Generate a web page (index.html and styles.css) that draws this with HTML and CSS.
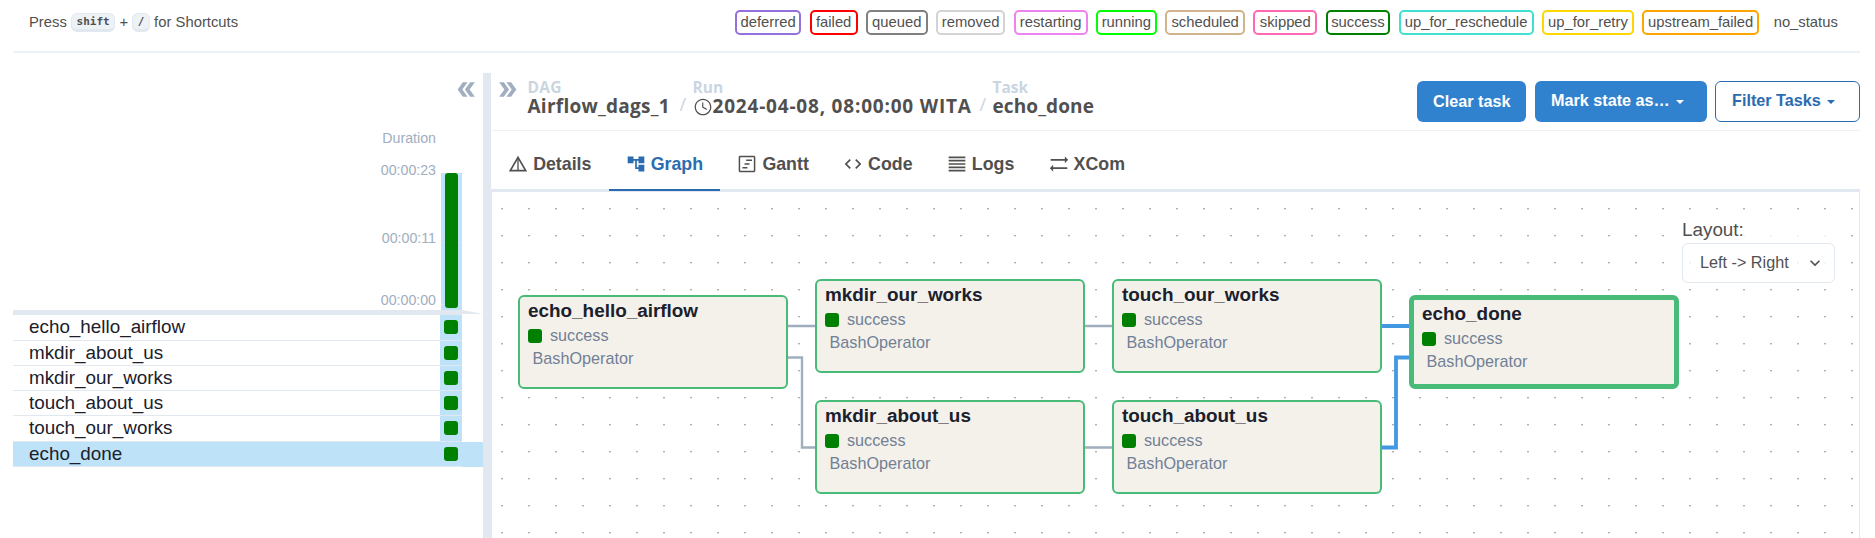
FILE: index.html
```html
<!DOCTYPE html>
<html lang="en">
<head>
<meta charset="utf-8">
<title>Airflow_dags_1 - Grid - Airflow</title>
<link rel="stylesheet" href="styles.css">
</head>
<body>
<div class="page">
  <header class="legend">
    <div class="shortcuts">Press <kbd>shift</kbd> + <kbd>/</kbd> for Shortcuts</div>
    <div class="states">
      <span class="state deferred">deferred</span>
      <span class="state failed">failed</span>
      <span class="state queued">queued</span>
      <span class="state removed">removed</span>
      <span class="state restarting">restarting</span>
      <span class="state running">running</span>
      <span class="state scheduled">scheduled</span>
      <span class="state skipped">skipped</span>
      <span class="state success">success</span>
      <span class="state up-for-reschedule">up_for_reschedule</span>
      <span class="state up-for-retry">up_for_retry</span>
      <span class="state upstream-failed">upstream_failed</span>
      <span class="state no-status">no_status</span>
    </div>
  </header>

  <main class="main">
    <aside class="grid">
      <div class="grid-toolbar">
        <svg class="chevrons flip" viewBox="0 0 24 24"><path d="M15.5 5H11l5 7-5 7h4.5l5-7z"/><path d="M8.5 5H4l5 7-5 7h4.5l5-7z"/></svg>
      </div>
      <div class="chart">
        <div class="axis">
          <span class="axis-title">Duration</span>
          <span class="tick-max">00:00:23</span>
          <span class="tick-mid">00:00:11</span>
          <span class="tick-min">00:00:00</span>
        </div>
        <div class="run"><div class="run-bar"></div></div>
      </div>
      <svg class="rule" viewBox="0 0 470 5"><path d="M0 0H449L470 4H449V5H0z"/></svg>
      <div class="row tall"><span class="task">echo_hello_airflow</span><span class="cell"><i></i></span></div>
      <div class="row"><span class="task">mkdir_about_us</span><span class="cell"><i></i></span></div>
      <div class="row"><span class="task">mkdir_our_works</span><span class="cell"><i></i></span></div>
      <div class="row"><span class="task">touch_about_us</span><span class="cell"><i></i></span></div>
      <div class="row tall"><span class="task">touch_our_works</span><span class="cell"><i></i></span></div>
      <div class="row selected"><span class="task">echo_done</span><span class="cell"><i></i></span></div>
    </aside>
    <div class="divider"></div>

    <section class="details">
      <div class="details-head">
        <svg class="chevrons" viewBox="0 0 24 24"><path d="M15.5 5H11l5 7-5 7h4.5l5-7z"/><path d="M8.5 5H4l5 7-5 7h4.5l5-7z"/></svg>
        <div class="crumbs">
          <div class="crumb dag"><span class="crumb-label">DAG</span><span class="crumb-value">Airflow_dags_1</span></div>
          <span class="slash">/</span>
          <div class="crumb run-crumb"><span class="crumb-label">Run</span><span class="crumb-value"><svg class="clock" viewBox="0 0 24 24"><path d="M11.99 2C6.47 2 2 6.48 2 12s4.47 10 9.99 10C17.52 22 22 17.52 22 12S17.52 2 11.99 2zM12 20.500c-4.700 0-8.500-3.800-8.500-8.500s3.800-8.500 8.500-8.500 8.500 3.800 8.500 8.500-3.800 8.500-8.500 8.500zM12.400 6.500H11v6l5.250 3.150.75-1.230-4.600-2.700z"/></svg>2024-04-08, 08:00:00 WITA</span></div>
          <span class="slash">/</span>
          <div class="crumb task-crumb"><span class="crumb-label">Task</span><span class="crumb-value">echo_done</span></div>
        </div>
        <div class="actions">
          <button class="btn solid clear">Clear task</button>
          <button class="btn solid mark">Mark state as…<b class="caret"></b></button>
          <button class="btn outline filter">Filter Tasks<b class="caret"></b></button>
        </div>
      </div>

      <nav class="tabs">
        <a class="tab t-details"><svg viewBox="0 0 24 24"><path d="M12 5.990 19.530 19H4.470L12 5.990M12 2 1 21h22L12 2z"/><path d="M11.200 5h1.600v15h-1.600z"/></svg>Details</a>
        <a class="tab t-graph active"><svg viewBox="0 0 24 24"><path d="M22 11V3h-7v3H9V3H2v8h7V8h2v10h4v3h7v-8h-7v3h-2V8h2v3z"/></svg>Graph</a>
        <a class="tab t-gantt"><svg viewBox="0 0 24 24"><path d="M20.200 3.800v16.400H3.800V3.800h16.400m0-1.800H3.800C2.800 2 2 2.800 2 3.800v16.400c0 1 .8 1.800 1.800 1.800h16.400c1 0 1.800-.8 1.800-1.800V3.800c0-1-.8-1.800-1.800-1.800z"/><path d="M11 6.500h7v1.800h-7zM9 11h6v1.800H9zM6.500 15.500h6v1.800h-6z"/></svg>Gantt</a>
        <a class="tab t-code"><svg viewBox="0 0 24 24"><path d="M9.400 16.600 4.800 12l4.600-4.600L8 6l-6 6 6 6 1.400-1.400zm5.200 0 4.600-4.600-4.600-4.600L16 6l6 6-6 6-1.400-1.400z"/></svg>Code</a>
        <a class="tab t-logs"><svg viewBox="0 0 24 24"><path d="M2 3h20v2H2zM2 7h20v2H2zM2 11h20v2H2zM2 15h20v2H2zM2 19h20v2H2z"/></svg>Logs</a>
        <a class="tab t-xcom"><svg viewBox="0 0 24 24"><path d="m23 7-4-4v3H2v2h17v3l4-4zM1 17l4 4v-3h17v-2H5v-3l-4 4z"/></svg>XCom</a>
      </nav>

      <div class="canvas">
        <svg class="edges" viewBox="0 0 1367 346">
          <defs>
            <pattern id="dots" x="9" y="16" width="27" height="27" patternUnits="userSpaceOnUse">
              <rect width="2" height="1" fill="#b0b0b0"/><rect y="1" width="2" height="1" fill="#e0e0e0"/>
            </pattern>
          </defs>
          <rect width="1367" height="346" fill="url(#dots)"/>
          <g class="edge"><path d="M296 134H324M296 165.500H310V255.500H324M593 134H621M593 255.500H621"/></g>
          <g class="edge lit"><path d="M890 134H918M890 255.500H904V165.500H918"/></g>
        </svg>
        <div class="node n1"><strong>echo_hello_airflow</strong><span class="status"><i></i>success</span><span class="operator">BashOperator</span></div>
        <div class="node n2"><strong>mkdir_our_works</strong><span class="status"><i></i>success</span><span class="operator">BashOperator</span></div>
        <div class="node n3"><strong>mkdir_about_us</strong><span class="status"><i></i>success</span><span class="operator">BashOperator</span></div>
        <div class="node n4"><strong>touch_our_works</strong><span class="status"><i></i>success</span><span class="operator">BashOperator</span></div>
        <div class="node n5"><strong>touch_about_us</strong><span class="status"><i></i>success</span><span class="operator">BashOperator</span></div>
        <div class="node n6 picked"><strong>echo_done</strong><span class="status"><i></i>success</span><span class="operator">BashOperator</span></div>
        <div class="layout">
          <span class="layout-label">Layout:</span>
          <div class="select">Left -&gt; Right<svg viewBox="0 0 24 24"><path d="M16.590 8.590 12 13.170 7.410 8.590 6 10l6 6 6-6z"/></svg></div>
        </div>
      </div>
    </section>
  </main>
</div>
</body>
</html>
```
FILE: styles.css
```css
* { box-sizing: border-box; }
body {
  margin: 0;
  background: #fff;
  color: #51504f;
  font-family: "Liberation Sans", Arial, sans-serif;
  overflow: hidden;
}
.page {
  width: 1875px;
  height: 538px;
  padding: 0 15px 0 13px;
  display: flex;
  flex-direction: column;
  overflow: hidden;
}
.legend {
  height: 53px;
  flex: none;
  border-bottom: 2px solid #edf2f7;
  display: flex;
  justify-content: space-between;
  padding: 10px 16px 0 16px;
  font-size: 14.800px;
}
.shortcuts { line-height: 25px; white-space: nowrap; word-spacing: .100px; }
kbd {
  display: inline-block;
  height: 19px;
  vertical-align: top;
  margin-top: 3px;
  padding: 0 4.500px;
  font: bold 11px/15px "DejaVu Sans Mono", monospace;
  background: #edf2f7;
  border: 1px solid #e2e8f0;
  border-bottom-width: 3px;
  border-radius: 6px;
}
.states { display: flex; gap: 8.300px; }
.state {
  height: 25px;
  line-height: 21px;
  border: 2px solid var(--c);
  border-radius: 5px;
  text-align: center;
  width: var(--w);
  white-space: nowrap;
}
.deferred { --c: mediumpurple; --w: 66.600px; }
.failed { --c: red; --w: 48px; }
.queued { --c: gray; --w: 61.600px; }
.removed { --c: lightgrey; --w: 69.600px; }
.restarting { --c: violet; --w: 73.800px; }
.running { --c: lime; --w: 61px; }
.scheduled { --c: tan; --w: 80px; }
.skipped { --c: hotpink; --w: 63.800px; }
.success { --c: green; --w: 64.800px; }
.up-for-reschedule { --c: turquoise; --w: 135px; }
.up-for-retry { --c: gold; --w: 92px; }
.upstream-failed { --c: orange; --w: 117px; }
.no-status { --c: transparent; --w: 76.500px; }

.main { display: flex; flex: 1; padding-top: 20px; min-height: 0; }
.grid { width: 470px; flex: none; }
.grid-toolbar { height: 50px; padding: 4px 4px 0 0; display: flex; justify-content: flex-end; }
.chevrons { width: 25px; height: 25px; fill: #a0aec0; flex: none; }
.flip { transform: scaleX(-1); }
.chart { height: 187px; display: flex; padding-right: 21px; justify-content: flex-end; }
.axis {
  display: flex;
  flex-direction: column;
  align-items: flex-end;
  width: 60px;
  margin-right: 5px;
  color: #a0aec0;
  font-size: 14.200px;
  line-height: 16px;
}
.axis-title { margin-top: 7px; }
.tick-max { margin-top: 16px; }
.tick-mid { margin-top: 52px; }
.tick-min { margin-top: 46px; }
.run {
  width: 21px;
  margin-top: 50px;
  padding: 0 4px;
  background: linear-gradient(#d3e4f3, #d3e4f3) 0 1px / 100% 1px no-repeat,
    linear-gradient(#d3e4f3, #d3e4f3) 0 69px / 100% 1px no-repeat,
    linear-gradient(#d3e4f3, #d3e4f3) 0 131px / 100% 1px no-repeat, #bee3f8;
}
.run-bar { height: 135px; background: green; border-radius: 3px; }
.rule { display: block; width: 470px; height: 5px; fill: #e2e8f0; }
.row {
  height: 25px;
  margin-right: 21px;
  padding-left: 16px;
  border-bottom: 1px solid #e2e8f0;
  display: flex;
  justify-content: space-between;
  font-size: 18.850px;
  line-height: 23px;
  color: #1a202c;
}
.tall { height: 26px; }
.cell { width: 22px; background: #bee3f8; padding: 5px 4px 0; }
.cell i { display: block; width: 14px; height: 14px; border-radius: 3px; background: green; }
.selected { background: #bee3f8; box-shadow: 21px 0 #bee3f8; }
.divider { width: 8px; flex: none; background: #e2e8f0; }

.details { flex: 1; min-width: 0; display: flex; flex-direction: column; }
.details-head {
  height: 58px;
  flex: none;
  border-bottom: 1px solid #edf2f7;
  display: flex;
  padding: 4px 0 0 4px;
}
.crumbs {
  display: flex;
  margin-left: 7.500px;
  font-family: "Open Sans", "Noto Sans", sans-serif;
  font-weight: 700;
}
.crumb { display: flex; flex-direction: column; white-space: nowrap; }
.crumb-label { font-size: 15.500px; line-height: 18px; height: 18px; margin-top: 1px; color: #cbd5e0; }
.crumb-value { font-size: 19px; line-height: 20px; height: 20px; display: flex; align-items: center; }
.dag { width: 152px; letter-spacing: .250px; }
.run-crumb { width: 287px; }
.run-crumb .crumb-value { letter-spacing: .800px; }
.task-crumb .crumb-value { letter-spacing: .100px; }
.slash { width: 13px; font-weight: 400; font-size: 18px; line-height: 20px; margin-top: 17px; color: #cbd5e0; }
.clock { width: 20px; height: 20px; margin-top: 2px; fill: #51504f; flex: none; }
.actions { margin-left: auto; display: flex; padding-top: 4px; }
.btn {
  height: 41px;
  padding: 0 0 0 16px;
  border: 0;
  border-radius: 6px;
  font: bold 16.200px/41px "Liberation Sans", Arial, sans-serif;
  text-align: left;
  white-space: nowrap;
}
.solid { background: #3182ce; color: #fff; }
.outline { background: #fff; color: #2b6cb0; border: 1px solid #2b6cb0; }
.clear { width: 109px; margin-right: 9px; }
.mark { width: 172px; margin-right: 8px; padding-bottom: 2px; line-height: 39px; }
.filter { width: 145px; padding: 0 0 2px 16px; line-height: 37px; }
.caret {
  display: inline-block;
  margin-left: 6px;
  vertical-align: 2px;
  border: 4.500px solid transparent;
  border-top-color: currentColor;
  border-bottom: 0;
}

.tabs { display: flex; height: 61px; flex: none; border-bottom: 3px solid #e2e8f0; }
.tab {
  height: 60px;
  padding: 8px 17.150px 0;
  display: flex;
  align-items: center;
  gap: 5px;
  font-weight: bold;
  font-size: 17.800px;
  line-height: 24px;
  border-bottom: 2px solid transparent;
}
.tab svg { width: 20px; height: 20px; fill: currentColor; flex: none; }
.active { color: #2b6cb0; border-color: #2b6cb0; }

.canvas {
  position: relative;
  flex: 1;
  border: 1px solid #e2e8f0;
  border-width: 0 1px;
}
.edges { position: absolute; left: 0; top: 0; width: 1367px; height: 346px; fill: none; }
.edge { stroke: #a0aec0; stroke-width: 2.400px; }
.lit { stroke: #4299e1; stroke-width: 3.800px; }
.node {
  position: absolute;
  width: 270px;
  height: 94px;
  padding: 3px 8px;
  border: 2px solid #48bb78;
  border-radius: 6px;
  background: #f4f1ea;
  display: flex;
  flex-direction: column;
}
.node strong { font-size: 18.900px; line-height: 22px; color: #1a202c; }
.status, .operator { font-size: 16.200px; line-height: 23px; color: #718096; }
.status { display: flex; align-items: center; gap: 8px; margin-top: 2px; }
.status i { width: 14px; height: 14px; border-radius: 3px; background: green; }
.operator { padding-left: 4.500px; }
.n1 { left: 26px; top: 103px; }
.n2 { left: 323px; top: 87px; }
.n3 { left: 323px; top: 208px; }
.n4 { left: 620px; top: 87px; }
.n5 { left: 620px; top: 208px; }
.n6 { left: 917px; top: 103px; }
.picked { border-width: 5px; }
.layout { position: absolute; left: 1190px; top: 26px; width: 153px; background: rgba(255, 255, 255, .8); }
.layout-label { display: block; font-size: 18.850px; line-height: 24px; height: 25px; }
.select {
  height: 40px;
  padding: 0 9px 2px 17px;
  border: 1px solid #e2e8f0;
  border-radius: 6px;
  display: flex;
  align-items: center;
  justify-content: space-between;
  font-size: 16.200px;
}
.select svg { width: 20px; height: 20px; margin-top: 1px; fill: #51504f; }
```
